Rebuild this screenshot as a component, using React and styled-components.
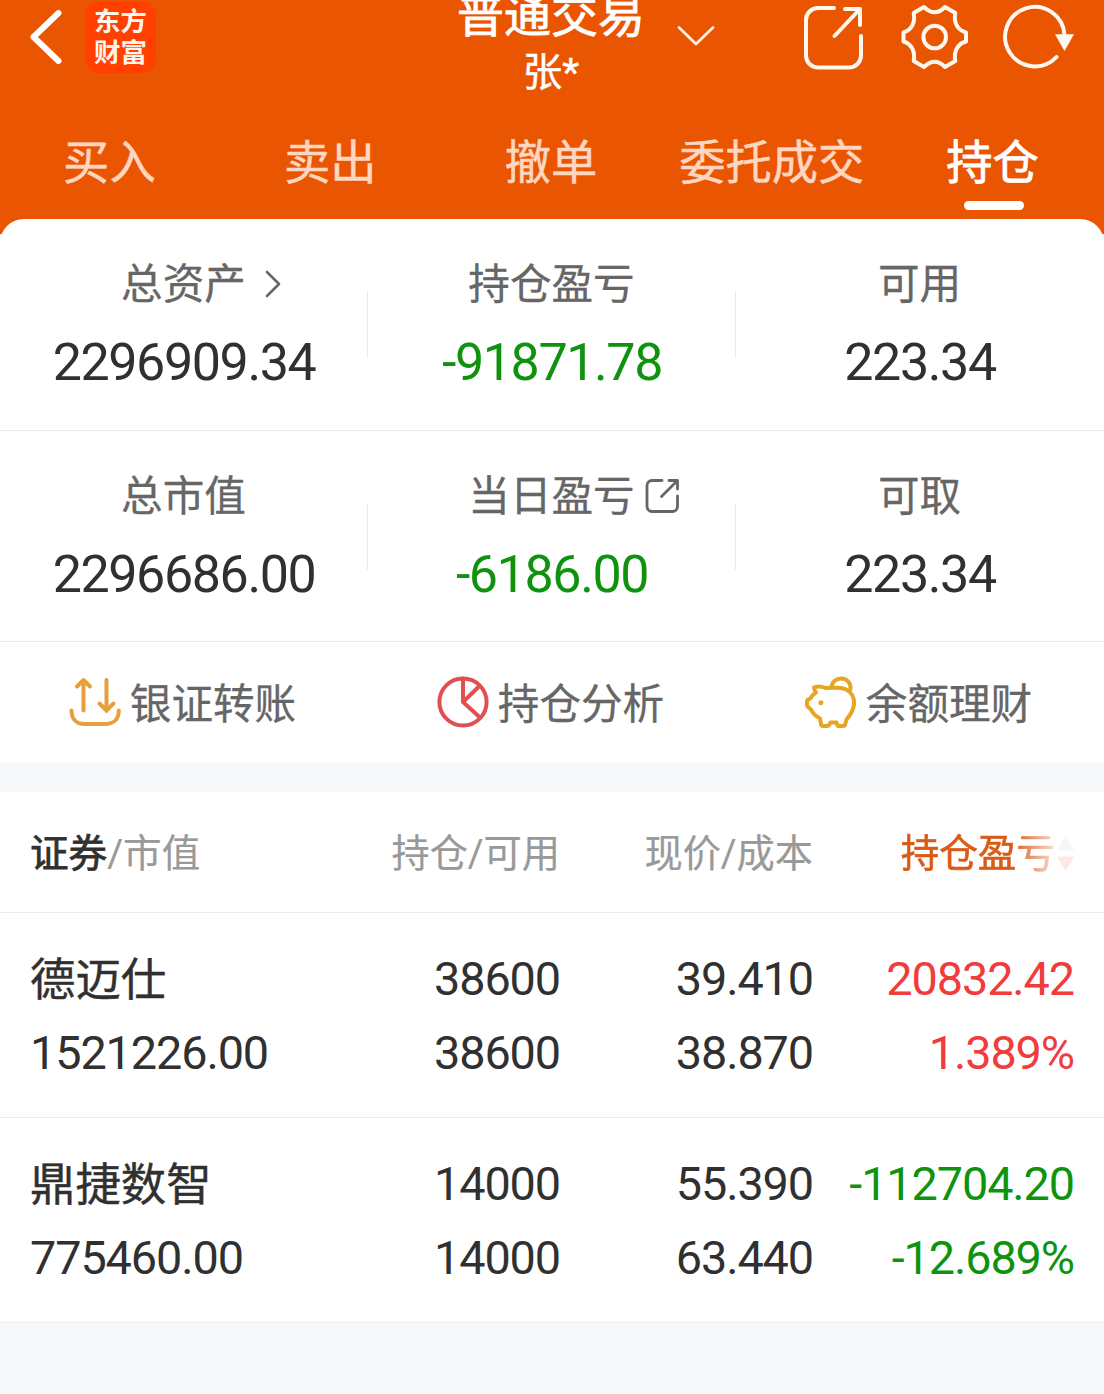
import React from "react";
import styled, { createGlobalStyle } from "styled-components";

const Global = createGlobalStyle`
  *, *::before, *::after { box-sizing: border-box; }
  html, body { margin: 0; padding: 0; }
  body {
    background: #f6f8fa;
    overflow: hidden;
    font-family: Roboto, "Noto Sans CJK SC", sans-serif;
    color: #303030;
  }
`;

const Page = styled.main`
  width: 1104px;
  height: 1394px;
  overflow: hidden;
  background: #f6f8fa;
`;

const Header = styled.header`
  height: 234px;
  background: #ea5502;
  color: #fff;
`;

const TopBar = styled.div`
  display: grid;
  grid-template-columns: 1fr 188px 1fr;
  height: 106px;
  padding: 0 30px;
`;

const BarSide = styled.div`
  display: flex;
  align-items: center;
  height: 74px;
`;

const BackIcon = styled.svg`
  width: 32px;
  height: 56px;
  margin-right: 23px;
`;

const Logo = styled.div`
  display: flex;
  align-items: center;
  justify-content: center;
  width: 71px;
  height: 72px;
  border-radius: 14px;
  background: #ff4000;
  color: #fff4ec;
  font-size: 26.5px;
  font-weight: 700;
  line-height: 31px;
  text-align: center;
`;

const TitleBlock = styled.div`
  display: flex;
  flex-direction: column;
  align-items: center;
  margin-top: -9px;
  padding-right: 2px;
  white-space: nowrap;
`;

const Title = styled.div`
  font-size: 47px;
  line-height: 50px;
  -webkit-text-stroke: 0.8px currentColor;
`;

const Account = styled.div`
  margin-top: 7px;
  font-size: 39.5px;
  line-height: 50px;
  -webkit-text-stroke: 0.4px currentColor;
`;

const ChevronIcon = styled.svg`
  width: 38px;
  height: 22px;
  margin-left: 31px;
  margin-top: -2px;
`;

const BarIcons = styled.div`
  display: flex;
  align-items: center;
  margin-left: auto;

  svg + svg {
    margin-left: 36px;
  }
  svg + svg:last-child {
    margin-left: 33px;
  }
`;

const Tabs = styled.nav`
  display: flex;
`;

const Tab = styled.div`
  flex: 1;
  display: flex;
  flex-direction: column;
  align-items: center;
  padding-top: 30px;
  font-size: 46.3px;
  line-height: 56px;
  white-space: nowrap;
  color: ${(p) => (p.$active ? "#fff" : "#ffd6c0")};
  -webkit-text-stroke: ${(p) => (p.$active ? 0.8 : 0.5)}px currentColor;
`;

const TabLabel = styled.span`
  margin: -1px 2px 1px 0;
`;

const TabLine = styled.span`
  width: 60px;
  height: 9px;
  margin-top: 9px;
  border-radius: 5px;
  background: #fff;
`;

const Card = styled.section`
  margin-top: -15px;
  border-radius: 24px 24px 0 0;
  background: #fff;
`;

const SummaryRow = styled.div`
  display: grid;
  grid-template-columns: repeat(3, 1fr);
  align-items: center;
  height: ${(p) => p.$height}px;
  border-bottom: 1px solid #ececee;
`;

const Metric = styled.div`
  position: relative;
  display: flex;
  flex-direction: column;
  align-items: center;

  & + &::before {
    content: "";
    position: absolute;
    left: -1px;
    top: 35px;
    width: 1px;
    height: 67px;
    background: #e9e9eb;
  }
`;

const MetricLabel = styled.div`
  display: flex;
  align-items: center;
  padding: 1px 1px 0 0;
  font-size: 41.6px;
  line-height: 56px;
  color: #666;
  -webkit-text-stroke: 0.3px currentColor;
`;

const Adornment = styled.span`
  display: flex;
  width: 0;
  overflow: visible;

  svg {
    flex: none;
    margin-left: ${(p) => p.$gap}px;
    margin-top: -2px;
  }
`;

const MetricValue = styled.div`
  margin-top: 20px;
  font-size: 52px;
  line-height: 60px;
  letter-spacing: -1.4px;
  color: ${(p) => p.$color || "#303030"};
`;

const Actions = styled.div`
  display: grid;
  grid-template-columns: repeat(3, 1fr);
  height: 120px;
`;

const Action = styled.div`
  display: flex;
  align-items: center;
  justify-content: center;
  gap: 9px;
  padding-right: 3px;
  font-size: 41.6px;
  line-height: 56px;
  color: #666;
  -webkit-text-stroke: 0.3px currentColor;
`;

const ActionText = styled.span`
  margin-top: 5px;
`;

const Holdings = styled.section`
  margin-top: 30px;
  background: #fff;
`;

const HoldingGrid = styled.div`
  display: grid;
  grid-template-columns: 268px 262px 253px 261px;
  padding: 0 30px;
  border-bottom: 1px solid #ececee;
`;

const HeadRow = styled(HoldingGrid)`
  align-items: center;
  height: 121px;
  padding-top: 4px;
  font-size: 38.2px;
  line-height: 50px;
  color: #999;
`;

const HeadCell = styled.div`
  text-align: ${(p) => (p.$left ? "left" : "right")};
  font-size: ${(p) => (p.$left ? 38.6 : 38.2)}px;
  -webkit-text-stroke: 0.2px currentColor;
`;

const Strong = styled.span`
  color: #303030;
  -webkit-text-stroke: 0.8px currentColor;
`;

const SortCell = styled.div`
  display: flex;
  align-items: center;
  justify-content: flex-end;
  gap: 2px;
`;

const SortText = styled.span`
  background: linear-gradient(to right, #d95b18 0, #d95b18 72%, #fbe6db 102%);
  background-clip: text;
  -webkit-background-clip: text;
  color: transparent;
  font-size: 38.6px;
  -webkit-text-stroke: 0.7px transparent;
`;

const StockRow = styled(HoldingGrid)`
  height: 205px;
  padding-top: 30px;
  align-content: start;
  font-size: 46.8px;
  letter-spacing: -1.1px;
  line-height: 73.5px;
`;

const Cell = styled.div`
  text-align: right;
  color: ${(p) => p.$color || "#303030"};
`;

const Name = styled(Cell)`
  padding-top: 2px;
  line-height: 71.5px;
  text-align: left;
  font-size: 45.4px;
  letter-spacing: 0;
  -webkit-text-stroke: 0.4px currentColor;
`;

const Amount = styled(Cell)`
  text-align: left;
`;

const GREEN = "#0f930f";
const RED = "#f03c3c";

const line = { fill: "none", strokeLinecap: "round", strokeLinejoin: "round" };

const ShareIcon = () => (
  <svg width="62" height="66" viewBox="804 4 62 66" {...line} stroke="#fff8ee" strokeWidth="4">
    <path d="M835 8H819A12 12 0 0 0 807 20V55.500A12 12 0 0 0 819 67.500H850A12 12 0 0 0 862 55.500V36" />
    <path d="M846 9H861V25M835.500 36L860 10" />
  </svg>
);

const GearIcon = () => (
  <svg width="68" height="66" viewBox="901 4 68 66" {...line} stroke="#fff8ee" strokeWidth="4">
    <path d="M924 7Q934.700 17.500 945 7L955.300 13C953.500 22 957 30 966 32.500V41.500C957 44 953.500 52 955.300 61L945 67Q934.700 56.500 924 67L913.700 61C915.500 52 912 44 903.500 41.500V32.500C912 30 915.500 22 913.700 13Z" />
    <circle cx="934.700" cy="37" r="11.300" />
  </svg>
);

const RefreshIcon = () => (
  <svg width="72" height="66" viewBox="1002 4 72 66" {...line} stroke="#fff8f0" strokeWidth="4">
    <path d="M1064.500 35A29.700 29.700 0 1 0 1056.500 57" />
    <path d="M1055 34.300H1074L1064.500 51Z" fill="#fff8f0" stroke="none" />
  </svg>
);

const ArrowRight = () => (
  <svg width="18" height="30" viewBox="0 0 18 30" {...line} stroke="#666" strokeWidth="2.600">
    <path d="M3 3L15 15L3 27" />
  </svg>
);

const OpenIcon = () => (
  <svg width="36" height="36" viewBox="645 476 36 36" {...line} stroke="#666" strokeWidth="2.800">
    <path d="M662 478.500H652A5 5 0 0 0 647 483.500V504.500A5 5 0 0 0 652 509.500H672.500A5 5 0 0 0 677.500 504.500V494" />
    <path d="M669 478.500H677.500V487M661.500 494.500L676.500 479.500" />
  </svg>
);

const TransferIcon = () => (
  <svg width="52" height="52" viewBox="69.500 675 52 52" {...line} stroke="#e5a03c" strokeWidth="4">
    <path d="M72 709.500C72 718 77 723 85 723H106C114 723 119.300 718 119.300 709.500" />
    <path d="M84 709.500V679.500M77.500 685.500L84 679L90.500 685.500M107 679V710M100 702.500L107 709.500L114 702.500" />
  </svg>
);

const PieIcon = () => (
  <svg width="52" height="52" viewBox="437.500 675.500 52 52" {...line} stroke="#e05050" strokeWidth="4">
    <circle cx="463.500" cy="701.500" r="23.600" />
    <path d="M463.500 678V701.500L480 685.500M463.500 701.500L480.500 717" />
  </svg>
);

const PigIcon = () => (
  <svg width="52" height="52" viewBox="805.500 675 52 52" {...line} stroke="#e6a624" strokeWidth="4">
    <path d="M814.500 686.500Q820 684.500 826 687Q835 686.500 842 687C851 689 855 695.500 854.500 703C854 710 850 715 847 718.500L845.500 724Q845 725 843.500 725H839.500Q838 725 837.700 723.500L837 721.500H831L829.500 724Q829 725 827.500 725H823.500Q821.700 725 821.500 723L820.500 717.500Q814 714 811.500 708.500L808.500 706Q807.500 705 807.500 704V700.500Q807.500 699 809 698.500L811 697.500Q812.500 694 816.500 691.500Q815 690 814.500 686.500Z" />
    <path d="M832 686C832.500 680.500 837 677.500 841.500 677.500C847 677.500 851 681.500 851 686.500Q851 688.500 850 690.500" />
    <circle cx="821.400" cy="701.700" r="2.500" fill="#e6a624" stroke="none" />
  </svg>
);

const SortIcon = () => (
  <svg width="17" height="36" viewBox="0 0 17 36">
    <path d="M8.500 0L17 14.500H0Z" fill="#f6f6f6" />
    <path d="M0 20.500H17L8.500 35Z" fill="#fde9e1" />
  </svg>
);

const tabs = ["买入", "卖出", "撤单", "委托成交", "持仓"];

const summary = [
  [
    { label: "总资产", value: "2296909.34", icon: <ArrowRight />, gap: 18 },
    { label: "持仓盈亏", value: "-91871.78", color: GREEN },
    { label: "可用", value: "223.34" },
  ],
  [
    { label: "总市值", value: "2296686.00" },
    { label: "当日盈亏", value: "-6186.00", color: GREEN, icon: <OpenIcon />, gap: 10.5 },
    { label: "可取", value: "223.34" },
  ],
];

const actions = [
  { label: "银证转账", icon: <TransferIcon /> },
  { label: "持仓分析", icon: <PieIcon /> },
  { label: "余额理财", icon: <PigIcon /> },
];

const stocks = [
  { name: "德迈仕", market: "1521226.00", held: "38600", free: "38600", price: "39.410", cost: "38.870", profit: "20832.42", rate: "1.389%", color: RED },
  { name: "鼎捷数智", market: "775460.00", held: "14000", free: "14000", price: "55.390", cost: "63.440", profit: "-112704.20", rate: "-12.689%", color: GREEN },
];

export default function App() {
  return (
    <Page>
      <Global />
      <Header>
        <TopBar>
          <BarSide>
            <BackIcon viewBox="30 9 32 56" {...line} stroke="#fff" strokeWidth="6">
              <path d="M58.500 13L33.500 37L58.500 61" />
            </BackIcon>
            <Logo>东方<br />财富</Logo>
          </BarSide>
          <TitleBlock>
            <Title>普通交易</Title>
            <Account>张*</Account>
          </TitleBlock>
          <BarSide>
            <ChevronIcon viewBox="677 25 38 22" {...line} stroke="#fff3e4" strokeWidth="2.800">
              <path d="M679 27.500L696 44L713 27.500" />
            </ChevronIcon>
            <BarIcons>
              <ShareIcon />
              <GearIcon />
              <RefreshIcon />
            </BarIcons>
          </BarSide>
        </TopBar>
        <Tabs>
          {tabs.map((t) => (
            <Tab key={t} $active={t === "持仓"}>
              <TabLabel>{t}</TabLabel>
              {t === "持仓" && <TabLine />}
            </Tab>
          ))}
        </Tabs>
      </Header>

      <Card>
        {summary.map((row, i) => (
          <SummaryRow key={i} $height={i === 0 ? 212 : 211}>
            {row.map((m) => (
              <Metric key={m.label}>
                <MetricLabel>
                  {m.label}
                  {m.icon && <Adornment $gap={m.gap}>{m.icon}</Adornment>}
                </MetricLabel>
                <MetricValue $color={m.color}>{m.value}</MetricValue>
              </Metric>
            ))}
          </SummaryRow>
        ))}
        <Actions>
          {actions.map((a) => (
            <Action key={a.label}>
              {a.icon}
              <ActionText>{a.label}</ActionText>
            </Action>
          ))}
        </Actions>
      </Card>

      <Holdings>
        <HeadRow>
          <HeadCell $left><Strong>证券</Strong>/市值</HeadCell>
          <HeadCell>持仓/可用</HeadCell>
          <HeadCell>现价/成本</HeadCell>
          <SortCell>
            <SortText>持仓盈亏</SortText>
            <SortIcon />
          </SortCell>
        </HeadRow>
        {stocks.map((s) => (
          <StockRow key={s.name}>
            <Name>{s.name}</Name>
            <Cell>{s.held}</Cell>
            <Cell>{s.price}</Cell>
            <Cell $color={s.color}>{s.profit}</Cell>
            <Amount>{s.market}</Amount>
            <Cell>{s.free}</Cell>
            <Cell>{s.cost}</Cell>
            <Cell $color={s.color}>{s.rate}</Cell>
          </StockRow>
        ))}
      </Holdings>
    </Page>
  );
}
